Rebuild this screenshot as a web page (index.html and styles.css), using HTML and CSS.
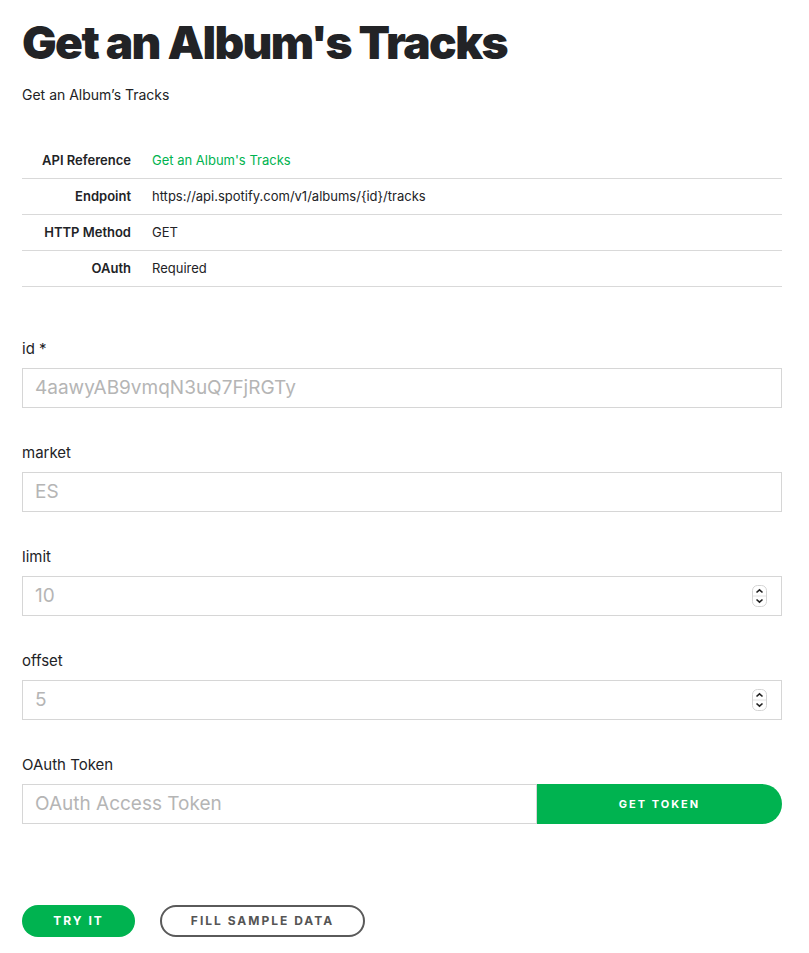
FILE: index.html
```html
<!DOCTYPE html>
<html>
<head>
<meta charset="utf-8">
<link rel="stylesheet" href="styles.css">
</head>
<body>
<main class="page">
  <h1 class="title">Get an Album's Tracks</h1>
  <p class="subtitle">Get an Album’s Tracks</p>

  <table class="info">
    <tr><th>API Reference</th><td><a class="link" href="#">Get an Album's Tracks</a></td></tr>
    <tr><th>Endpoint</th><td>https://api.spotify.com/v1/albums/{id}/tracks</td></tr>
    <tr><th>HTTP Method</th><td>GET</td></tr>
    <tr><th>OAuth</th><td>Required</td></tr>
  </table>

  <form class="form">
    <div class="field">
      <label class="label">id *</label>
      <div class="box"><input class="input" type="text" placeholder="4aawyAB9vmqN3uQ7FjRGTy"></div>
    </div>
    <div class="field">
      <label class="label">market</label>
      <div class="box"><input class="input" type="text" placeholder="ES"></div>
    </div>
    <div class="field">
      <label class="label">limit</label>
      <div class="box">
        <input class="input" type="text" placeholder="10">
        <svg class="spin" width="15" height="22" viewBox="0 0 15 22"><rect x="0.5" y="0.5" width="14" height="21" rx="5" fill="#fff" stroke="#d4d4d4"/><line x1="1" y1="11" x2="14" y2="11" stroke="#e2e2e2"/><path d="M4.5 7.5 L7.5 4.8 L10.5 7.5" fill="none" stroke="#222" stroke-width="1.6"/><path d="M4.5 14.5 L7.5 17.2 L10.5 14.5" fill="none" stroke="#222" stroke-width="1.6"/></svg>
      </div>
    </div>
    <div class="field">
      <label class="label">offset</label>
      <div class="box">
        <input class="input" type="text" placeholder="5">
        <svg class="spin" width="15" height="22" viewBox="0 0 15 22"><rect x="0.5" y="0.5" width="14" height="21" rx="5" fill="#fff" stroke="#d4d4d4"/><line x1="1" y1="11" x2="14" y2="11" stroke="#e2e2e2"/><path d="M4.5 7.5 L7.5 4.8 L10.5 7.5" fill="none" stroke="#222" stroke-width="1.6"/><path d="M4.5 14.5 L7.5 17.2 L10.5 14.5" fill="none" stroke="#222" stroke-width="1.6"/></svg>
      </div>
    </div>
    <div class="field">
      <label class="label">OAuth Token</label>
      <div class="token-row">
        <div class="box token-box"><input class="input" type="text" placeholder="OAuth Access Token"></div>
        <button class="btn-token" type="button">GET TOKEN</button>
      </div>
    </div>

    <div class="actions">
      <button class="btn btn-green" type="button">TRY IT</button>
      <button class="btn btn-outline" type="button">FILL SAMPLE DATA</button>
    </div>
  </form>
</main>
</body>
</html>
```
FILE: styles.css
```css
* { box-sizing: border-box; }
html, body { margin: 0; padding: 0; background: #fff; }
body {
  font-family: "Inter", "Lato", "Liberation Sans", sans-serif;
  color: #222326;
}
.page {
  width: 760px;
  margin-left: 22px;
  padding-top: 14px;
}
.title {
  margin: 0;
  font-size: 46px;
  line-height: 56px;
  font-weight: 900;
  letter-spacing: -1.6px;
  color: #222326;
}
.subtitle {
  margin: 15px 0 0;
  font-size: 14px;
  line-height: 20px;
  color: #222326;
}
.info {
  margin-top: 37px;
  width: 760px;
  border-collapse: collapse;
  font-size: 13px;
}
.info tr { height: 36px; border-bottom: 1px solid #d9d9d9; }
.info th {
  width: 130px;
  text-align: right;
  padding: 0 21px 0 0;
  font-weight: 600;
  color: #222326;
  white-space: nowrap;
}
.info td { padding: 0; color: #222326; }
.link { color: #00b350; text-decoration: none; }

.form { margin-top: 52px; }
.field { display: flex; flex-direction: column; margin-bottom: 35px; }
.label {
  font-size: 15px;
  line-height: 20px;
  margin-bottom: 9px;
  color: #222326;
}
.box {
  display: flex;
  align-items: center;
  height: 40px;
  border: 1px solid #d6d6d6;
  background: #fff;
}
.input {
  flex: 1;
  height: 100%;
  border: 0;
  outline: none;
  padding: 0 12px;
  font-family: inherit;
  font-size: 19px;
  color: #222;
  background: transparent;
  min-width: 0;
}
.input::placeholder { color: #b5b5b5; }
.spin { margin-right: 14px; flex: none; }
.token-row { display: flex; }
.token-box { flex: none; width: 515px; }
.btn-token {
  flex: 1;
  height: 40px;
  border: 0;
  border-radius: 0 20px 20px 0;
  background: #00b350;
  color: #fff;
  font-family: inherit;
  font-size: 11px;
  font-weight: 700;
  letter-spacing: 2px;
}
.actions {
  display: flex;
  gap: 25px;
  margin-top: 81px;
}
.btn {
  height: 32px;
  border-radius: 16px;
  font-family: inherit;
  font-size: 12px;
  font-weight: 700;
  letter-spacing: 2px;
  padding: 0;
}
.btn-green {
  width: 113px;
  background: #00b350;
  border: 0;
  color: #fff;
}
.btn-outline {
  width: 205px;
  background: #fff;
  border: 2px solid #5a5a5a;
  color: #555;
}
```
